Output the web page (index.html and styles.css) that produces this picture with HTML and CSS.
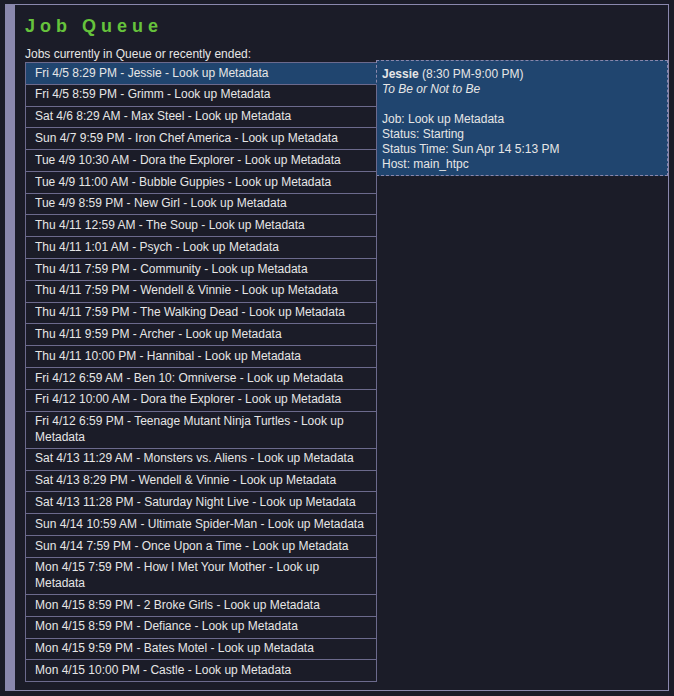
FILE: index.html
```html
<!DOCTYPE html>
<html>
<head>
<meta charset="utf-8">
<title>Job Queue</title>
<link rel="stylesheet" href="styles.css">
</head>
<body>
<div class="panel">
  <h1 class="title">Job Queue</h1>
  <div class="subtitle">Jobs currently in Queue or recently ended:</div>
  <ul class="queue">
    <li class="job active">Fri 4/5 8:29 PM - Jessie - Look up Metadata
      <div class="tip">
        <div><b>Jessie</b> (8:30 PM-9:00 PM)</div>
        <div><i>To Be or Not to Be</i></div>
        <div class="blank">&nbsp;</div>
        <div>Job: Look up Metadata</div>
        <div>Status: Starting</div>
        <div>Status Time: Sun Apr 14 5:13 PM</div>
        <div>Host: main_htpc</div>
      </div>
    </li>
    <li class="job">Fri 4/5 8:59 PM - Grimm - Look up Metadata</li>
    <li class="job">Sat 4/6 8:29 AM - Max Steel - Look up Metadata</li>
    <li class="job">Sun 4/7 9:59 PM - Iron Chef America - Look up Metadata</li>
    <li class="job">Tue 4/9 10:30 AM - Dora the Explorer - Look up Metadata</li>
    <li class="job">Tue 4/9 11:00 AM - Bubble Guppies - Look up Metadata</li>
    <li class="job">Tue 4/9 8:59 PM - New Girl - Look up Metadata</li>
    <li class="job">Thu 4/11 12:59 AM - The Soup - Look up Metadata</li>
    <li class="job">Thu 4/11 1:01 AM - Psych - Look up Metadata</li>
    <li class="job">Thu 4/11 7:59 PM - Community - Look up Metadata</li>
    <li class="job">Thu 4/11 7:59 PM - Wendell &amp; Vinnie - Look up Metadata</li>
    <li class="job">Thu 4/11 7:59 PM - The Walking Dead - Look up Metadata</li>
    <li class="job">Thu 4/11 9:59 PM - Archer - Look up Metadata</li>
    <li class="job">Thu 4/11 10:00 PM - Hannibal - Look up Metadata</li>
    <li class="job">Fri 4/12 6:59 AM - Ben 10: Omniverse - Look up Metadata</li>
    <li class="job">Fri 4/12 10:00 AM - Dora the Explorer - Look up Metadata</li>
    <li class="job">Fri 4/12 6:59 PM - Teenage Mutant Ninja Turtles - Look up Metadata</li>
    <li class="job">Sat 4/13 11:29 AM - Monsters vs. Aliens - Look up Metadata</li>
    <li class="job">Sat 4/13 8:29 PM - Wendell &amp; Vinnie - Look up Metadata</li>
    <li class="job">Sat 4/13 11:28 PM - Saturday Night Live - Look up Metadata</li>
    <li class="job">Sun 4/14 10:59 AM - Ultimate Spider-Man - Look up Metadata</li>
    <li class="job">Sun 4/14 7:59 PM - Once Upon a Time - Look up Metadata</li>
    <li class="job">Mon 4/15 7:59 PM - How I Met Your Mother - Look up Metadata</li>
    <li class="job">Mon 4/15 8:59 PM - 2 Broke Girls - Look up Metadata</li>
    <li class="job">Mon 4/15 8:59 PM - Defiance - Look up Metadata</li>
    <li class="job">Mon 4/15 9:59 PM - Bates Motel - Look up Metadata</li>
    <li class="job">Mon 4/15 10:00 PM - Castle - Look up Metadata</li>
  </ul>
</div>
</body>
</html>
```

FILE: styles.css
```css
html, body {
  margin: 0;
  padding: 0;
  background: #1b1c28;
}

body {
  font-family: "Liberation Sans", Arial, sans-serif;
  font-size: 12px;
  line-height: 15px;
  color: #e6e6e6;
}

.panel {
  margin: 4px 5px 0 5px;
  border: 1px solid #8a88ad;
  border-left: 10px solid #8a88ad;
  padding: 0 10px 8px 10px;
  background: #1b1c28;
}

.title {
  margin: 10.5px 0 10.5px 0;
  font-size: 18px;
  line-height: 21px;
  font-weight: bold;
  letter-spacing: 5px;
  color: #66c33c;
}

.subtitle {
  line-height: 15px;
}

.queue {
  list-style: none;
  margin: 0;
  padding: 0;
  width: 352px;
}

.job {
  position: relative;
  border: 1px solid #6c6a8d;
  padding: 2.65px 9px;
  line-height: 15.5px;
}

.job + .job {
  border-top: none;
}

.job.active {
  background: #20456f;
}

.tip {
  position: absolute;
  left: 350px;
  top: -3px;
  width: 292px;
  box-sizing: border-box;
  padding: 6px 5px 3px 5px;
  background: #20456f;
  border: 1px dashed #8a88ad;
  line-height: 15px;
  color: #e6e6e6;
}

.tip b {
  font-weight: bold;
}
```
